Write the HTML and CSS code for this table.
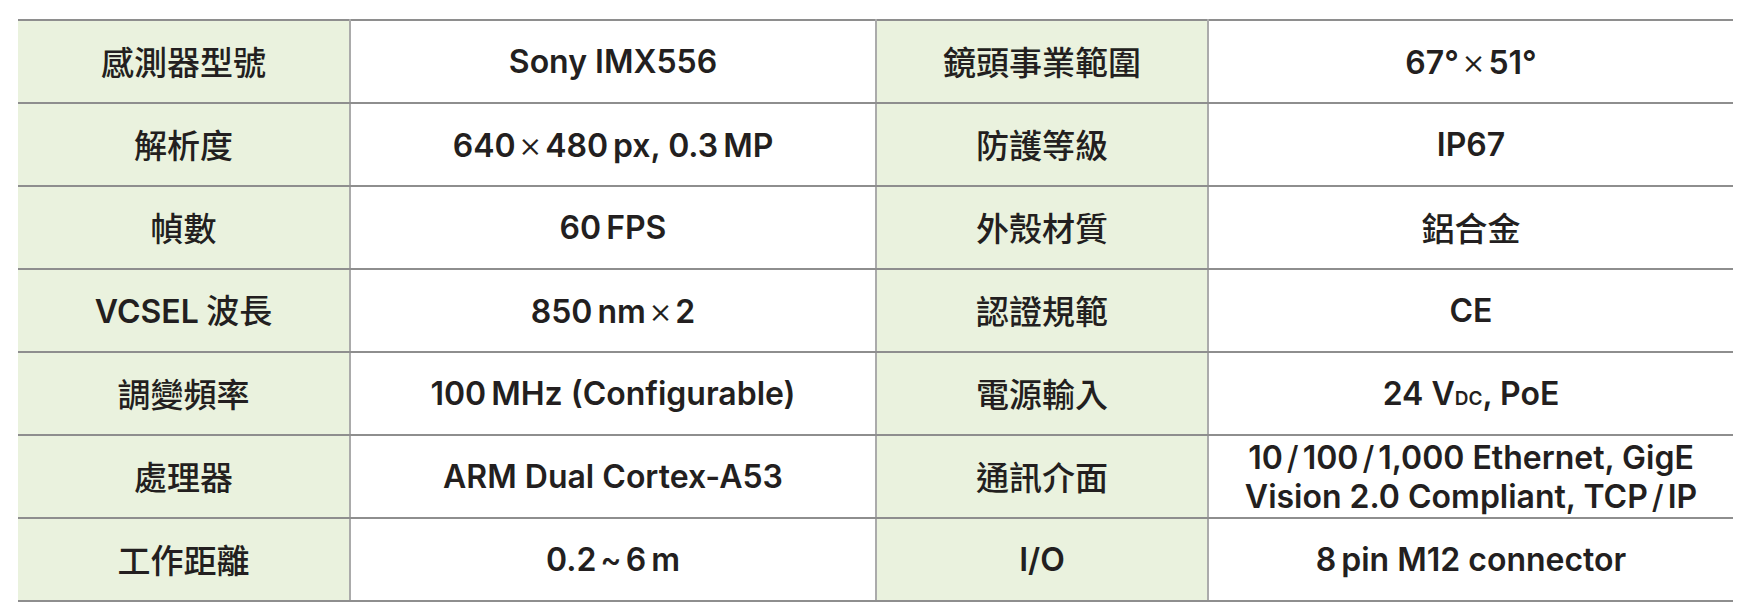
FILE: index.html
```html
<!DOCTYPE html>
<html lang="zh-Hant">
<head>
<meta charset="utf-8">
<title>規格表</title>
<link rel="stylesheet" href="styles.css">
</head>
<body>
<table class="spec">
  <colgroup>
    <col class="c-label"><col class="c-value"><col class="c-label"><col class="c-value2">
  </colgroup>
  <tbody>
    <tr>
      <th>感測器型號</th><td>Sony IMX556</td>
      <th>鏡頭事業範圍</th><td>67°<span class="x">×</span>51°</td>
    </tr>
    <tr>
      <th>解析度</th><td>640<span class="x">×</span>480<span class="th"></span>px, 0.3<span class="th"></span>MP</td>
      <th>防護等級</th><td>IP67</td>
    </tr>
    <tr>
      <th>幀數</th><td>60<span class="th"></span>FPS</td>
      <th>外殼材質</th><td class="zh">鋁合金</td>
    </tr>
    <tr>
      <th><span class="lat">VCSEL</span> 波長</th><td>850<span class="th"></span>nm<span class="x">×</span>2</td>
      <th>認證規範</th><td>CE</td>
    </tr>
    <tr>
      <th>調變頻率</th><td>100<span class="th"></span>MHz (Configurable)</td>
      <th>電源輸入</th><td>24 V<span class="sub">DC</span>, PoE</td>
    </tr>
    <tr>
      <th>處理器</th><td>ARM Dual Cortex-A53</td>
      <th>通訊介面</th><td class="two">10<span class="sl">/</span>100<span class="sl">/</span>1,000 Ethernet, GigE<br>Vision 2.0 Compliant, TCP<span class="sl">/</span>IP</td>
    </tr>
    <tr>
      <th>工作距離</th><td>0.2<span class="sl">~</span>6<span class="th"></span>m</td>
      <th class="lat">I/O</th><td>8<span class="th"></span>pin M12 connector</td>
    </tr>
  </tbody>
</table>
</body>
</html>
```

FILE: styles.css
```css
html, body {
  margin: 0;
  padding: 0;
  background: #ffffff;
}
body {
  padding: 19px 17px 0 18px;
  font-family: "Inter", "Noto Sans CJK TC", sans-serif;
  color: #231f20;
}
.spec {
  width: 1715px;
  border-collapse: collapse;
  table-layout: fixed;
  border-top: 2px solid #7d7d7d;
  border-bottom: 2px solid #7d7d7d;
}
.c-label { width: 332px; }
.c-value { width: 526px; }
.c-value2 { width: 525px; }
.spec th, .spec td {
  height: 81px;
  padding: 0;
  text-align: center;
  vertical-align: middle;
  border-top: 2px solid #8e8e8e;
  border-bottom: 2px solid #8e8e8e;
  border-left: 2px solid #ababab;
  border-right: 2px solid #ababab;
  font-size: 32px;
  font-weight: 600;
  line-height: 1.3;
}
.spec tr > :first-child { border-left: none; }
.spec tr > :last-child { border-right: none; }
.spec th {
  background: #eaf2de;
  font-family: "Noto Sans CJK TC", sans-serif;
  font-size: 33px;
  font-weight: 500;
}
.spec td.zh {
  font-family: "Noto Sans CJK TC", sans-serif;
  font-size: 33px;
  font-weight: 500;
}
.spec .lat {
  font-family: "Inter", sans-serif;
  font-size: 32px;
  font-weight: 600;
}
.x {
  font-weight: 300;
  font-size: 36px;
  margin: 0 3px;
}
.th { display: inline-block; width: 5px; }
.sl { margin: 0 4px; font-weight: 500; }
.sub {
  font-size: 19px;
  font-weight: 600;
}
.spec td.two {
  line-height: 39px;
}
```
